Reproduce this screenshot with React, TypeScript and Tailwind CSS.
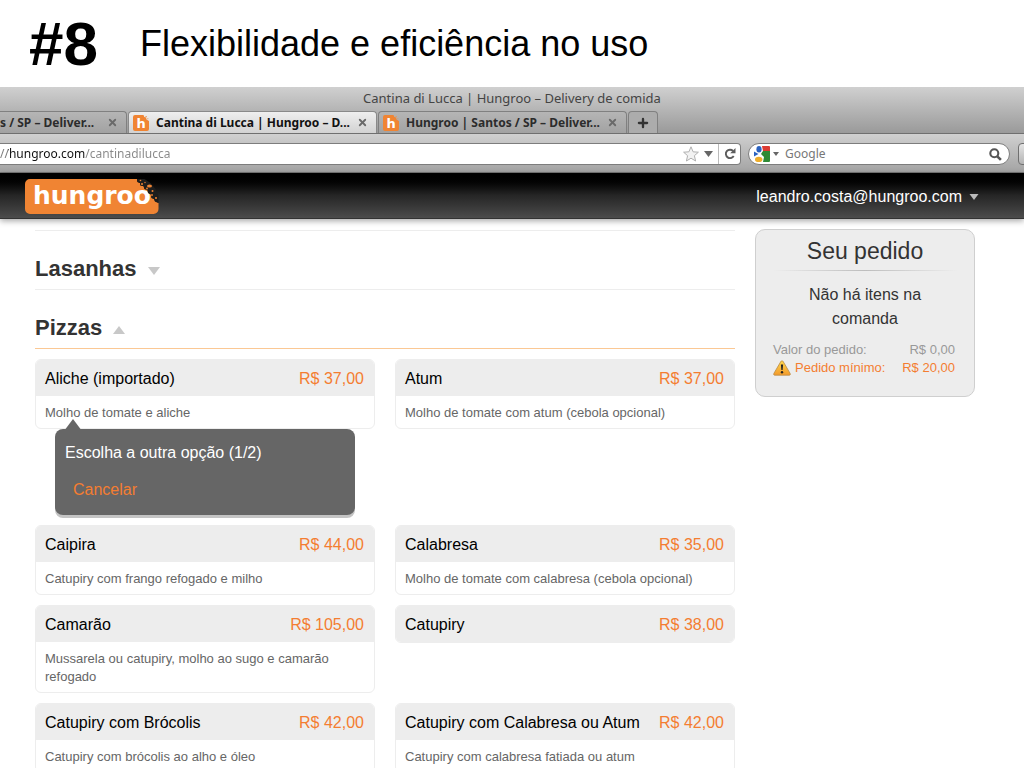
import { Plus, X } from "lucide-react";

const tabs = [
  { title: "s / SP – Deliver...", icon: false, active: false, width: "w-[127px]" },
  { title: "Cantina di Lucca | Hungroo – D...", icon: true, active: true, width: "w-[249px]" },
  { title: "Hungroo | Santos / SP – Deliver...", icon: true, active: false, width: "w-[249px]" },
];

const pizzas = [
  { name: "Aliche (importado)", price: "R$ 37,00", description: "Molho de tomate e aliche", choosing: true },
  { name: "Atum", price: "R$ 37,00", description: "Molho de tomate com atum (cebola opcional)" },
  { name: "Caipira", price: "R$ 44,00", description: "Catupiry com frango refogado e milho" },
  { name: "Calabresa", price: "R$ 35,00", description: "Molho de tomate com calabresa (cebola opcional)" },
  { name: "Camarão", price: "R$ 105,00", description: "Mussarela ou catupiry, molho ao sugo e camarão refogado" },
  { name: "Catupiry", price: "R$ 38,00" },
  { name: "Catupiry com Brócolis", price: "R$ 42,00", description: "Catupiry com brócolis ao alho e óleo" },
  { name: "Catupiry com Calabresa ou Atum", price: "R$ 42,00", description: "Catupiry com calabresa fatiada ou atum" },
];

function Triangle({ up = false, className = "" }: { up?: boolean; className?: string }) {
  return (
    <svg viewBox="0 0 12 8" className={className} fill="currentColor" aria-hidden="true">
      <path d={up ? "M0 8 6 0l6 8z" : "M0 0h12L6 8z"} />
    </svg>
  );
}

function Favicon() {
  return (
    <svg viewBox="0 0 16 16" className="size-4 shrink-0" aria-hidden="true">
      <path d="M2 0h8.500l.8 2 1.700.5.5 2L16 6v8a2 2 0 0 1-2 2H2a2 2 0 0 1-2-2V2a2 2 0 0 1 2-2z" fill="#f08433" />
      <path d="M12.500 1h1.300v1.300h-1.300zM14.300 3.200h1v1h-1z" fill="#e89a5c" />
      <text x="3.500" y="12.500" fill="#fff" fontSize="13" fontWeight="700" fontFamily="DejaVu Sans, sans-serif">
        h
      </text>
    </svg>
  );
}

function Logo() {
  return (
    <svg viewBox="0 0 134 35" className="h-[35px] w-[134px] overflow-visible" role="img" aria-label="hungroo">
      <defs>
        <clipPath id="logo-shape">
          <path d="M5 0h107l.5 3 2.500 1 .5 2.500 3 .5 1 3 3 1 .5 3 3 1.500.5 3.500 2.500 1 1 2.500 3.500 1.500v6a5 5 0 0 1-5 5H5a5 5 0 0 1-5-5V5a5 5 0 0 1 5-5z" />
        </clipPath>
      </defs>
      <g clipPath="url(#logo-shape)">
        <rect width="134" height="35" fill="#f08433" />
        <text x="8" y="25" fill="#fff" fontSize="25" fontWeight="700" fontFamily="DejaVu Sans, sans-serif">
          hungroo
        </text>
      </g>
      <path d="M112 0l.5 3 2.500 1 .5 2.500 3 .5 1 3 3 1 .5 3 3 1.500.5 3.500 2.500 1 1 2.500 3.500 1.500V17l-3-7-5-6-6-4z" fill="#1d1d1d" />
      <g fill="#f08433">
        <ellipse cx="124.500" cy="7" rx="2.500" ry="1.500" />
        <circle cx="117" cy="5" r="1" />
        <circle cx="115.500" cy="1.500" r=".8" />
        <circle cx="122" cy="9.500" r=".9" />
        <circle cx="127.500" cy="12" r="1" />
        <circle cx="127" cy="16" r=".9" />
        <circle cx="131" cy="19" r="1" />
        <circle cx="120" cy="3.500" r=".7" />
      </g>
    </svg>
  );
}

function GoogleIcon() {
  return (
    <svg viewBox="0 0 16 16" className="size-4" aria-hidden="true">
      <path d="M8 0h7a1 1 0 0 1 1 1v4H9z" fill="#dc3b33" />
      <path d="M9 5h7v10a1 1 0 0 1-1 1H9l1-5-3-3z" fill="#2f8a36" />
      <path d="M0 5.500l4.500 2.500L0 10.500z" fill="#2a62c0" />
      <ellipse cx="5" cy="3.200" rx="2.600" ry="3.200" fill="#2a62c0" />
      <ellipse cx="4.700" cy="13.400" rx="3.700" ry="2.600" fill="#eeae2c" />
    </svg>
  );
}

function StarIcon() {
  return (
    <svg viewBox="0 0 16 16" className="size-4" aria-hidden="true">
      <path
        d="M8 .8l2.100 5 5.300.4-4 3.500 1.200 5.300L8 12.200 3.400 15l1.200-5.300-4-3.500 5.300-.4z"
        fill="#f2f2f2"
        stroke="#b0b0b0"
        strokeLinejoin="round"
      />
    </svg>
  );
}

function ReloadIcon() {
  return (
    <svg viewBox="0 0 12 12" className="size-3" aria-hidden="true">
      <path d="M9 2.900A4.200 4.200 0 1 0 9.700 8" fill="none" stroke="#5c5c5c" strokeWidth="1.900" />
      <path d="M11.500 0v5.300H6.200z" fill="#5c5c5c" />
    </svg>
  );
}

function SearchIcon() {
  return (
    <svg viewBox="0 0 13 13" className="size-[13px]" fill="none" stroke="#555" aria-hidden="true">
      <circle cx="5.300" cy="5.300" r="4" strokeWidth="2.100" />
      <path d="M8.300 8.300l3.600 3.600" strokeWidth="2.600" />
    </svg>
  );
}

function WarningIcon() {
  return (
    <svg viewBox="0 0 18 16" className="h-4 w-[18px]" aria-hidden="true">
      <defs>
        <linearGradient id="warning" x1="0" y1="0" x2="0" y2="1">
          <stop offset="0" stopColor="#ffd84d" />
          <stop offset="1" stopColor="#f39a2b" />
        </linearGradient>
      </defs>
      <path
        d="M9 .8c.6 0 .9.300 1.200.8l6.900 11.800c.5.9.1 1.800-.9 1.800H1.800c-1 0-1.400-.9-.9-1.800L7.800 1.600C8.100 1.100 8.400.8 9 .8z"
        fill="url(#warning)"
        stroke="#b98a45"
        strokeWidth=".8"
      />
      <path d="M7.900 4.500h2.200l-.5 5.500H8.400z" fill="#222" />
      <circle cx="9" cy="12.200" r="1.200" fill="#222" />
    </svg>
  );
}

function BrowserChrome() {
  return (
    <div className="font-['Noto_Sans',sans-serif]">
      <div className="border-b border-[#6f6f6f] bg-linear-to-b from-[#d0d0d0] to-[#9a9a9a]">
        <div className="flex h-6 items-center justify-center text-[13px] text-[#444]">
          Cantina di Lucca | Hungroo – Delivery de comida
        </div>
        <div className="flex gap-px">
          {tabs.map((tab) => (
            <div
              key={tab.title}
              className={`flex h-[22px] items-center overflow-hidden border-x border-t text-xs font-bold ${tab.width} ${
                tab.icon ? "rounded-t-sm pl-1" : "rounded-tr-sm border-l-0"
              } ${
                tab.active
                  ? "border-[#8a8a8a] bg-linear-to-b from-[#efefef] to-[#d2d2d2] text-[#111]"
                  : "border-[#808080] bg-linear-to-b from-[#b5b5b5] to-[#a2a2a2] text-[#2c2c2c]"
              }`}
            >
              {tab.icon && <Favicon />}
              <span className={`flex-1 whitespace-nowrap ${tab.icon ? "pl-[7px]" : ""}`}>{tab.title}</span>
              <button aria-label="Fechar aba" className="mr-2 text-[#6a6a6a]">
                <X className="size-[11px]" strokeWidth={4} />
              </button>
            </div>
          ))}
          <button
            aria-label="Nova aba"
            className="flex h-[22px] w-[30px] items-center justify-center rounded-t-sm border-x border-t border-[#808080] bg-[#acacac] text-[#333]"
          >
            <Plus className="size-[14px]" strokeWidth={4} />
          </button>
        </div>
      </div>

      <div className="flex h-[39px] items-center overflow-hidden border-b border-[#777] bg-linear-to-b from-[#d0d0d0] to-[#a4a4a4] pt-[2px] text-xs">
        <div className="flex h-[22px] flex-1 items-center rounded-r-sm border-y border-r border-[#7d7d7d] bg-white">
          <input
            aria-label="Endereço"
            defaultValue="//hungroo.com/cantinadilucca"
            className="min-w-0 flex-1 bg-linear-[90deg,#777_8px,#111_8px,#111_85px,#888_85px] bg-clip-text text-transparent outline-none"
          />
          <button aria-label="Favoritar">
            <StarIcon />
          </button>
          <button aria-label="Histórico" className="px-[5px] text-[#666]">
            <Triangle className="h-2 w-[9px]" />
          </button>
          <button
            aria-label="Recarregar"
            className="flex h-full w-[22px] items-center justify-center border-l border-[#bbb]"
          >
            <ReloadIcon />
          </button>
        </div>
        <div className="ml-[7px] flex h-[22px] w-[262px] items-center rounded-full border border-[#7d7d7d] bg-white pr-[7px] pl-[5px]">
          <GoogleIcon />
          <Triangle className="mx-[3px] h-1 w-[6px] text-[#666]" />
          <input
            aria-label="Pesquisar"
            placeholder="Google"
            className="min-w-0 flex-1 pl-[3px] outline-none placeholder:text-[#777]"
          />
          <button aria-label="Buscar">
            <SearchIcon />
          </button>
        </div>
        <button
          aria-label="Downloads"
          className="-mr-6 ml-2 h-[22px] w-[30px] shrink-0 rounded-sm border border-[#6f6f6f] bg-linear-to-b from-[#e4e4e4] to-[#b4b4b4]"
        />
      </div>
    </div>
  );
}

function PizzaItem({ name, price, description, choosing }: (typeof pizzas)[number]) {
  return (
    <li>
      <div className="overflow-hidden rounded-md border border-[#ededed] bg-white">
        <a
          href="#comanda"
          className="flex h-9 items-center justify-between bg-[#ededed] px-[9px] pt-[2px] pr-[10px] whitespace-nowrap"
        >
          <span className="text-black">{name}</span>
          <span className="text-[#f47d31]">{price}</span>
        </a>
        {description && (
          <p className="px-[9px] pt-2 pb-[6px] text-[13px] leading-[18px] text-[#666]">{description}</p>
        )}
      </div>
      {choosing && (
        <div className="relative mx-5 h-[86px] rounded-lg bg-[#666] px-[10px] pt-3 shadow-[0_3px_0_#c4c4c4]">
          <Triangle up className="absolute -top-[10px] left-[9px] h-[11px] w-[18px] text-[#666]" />
          <p className="leading-6 text-white">Escolha a outra opção (1/2)</p>
          <button className="mt-[13px] px-2 leading-6 text-[#f47d31]">Cancelar</button>
        </div>
      )}
    </li>
  );
}

function Menu() {
  return (
    <main className="flex-1 pt-[11px]">
      <h2 className="border-y border-[#ededed] pt-[25px] pb-[7px] text-[22px] leading-[26px] font-bold">
        <button className="flex items-center gap-[11px]">
          Lasanhas
          <Triangle className="mt-1 h-2 w-3 text-[#c8c8c8]" />
        </button>
      </h2>
      <h2 className="border-b border-[#fbc894] pt-[25px] pb-[7px] text-[22px] leading-[26px] font-bold">
        <button className="flex items-center gap-[11px]">
          Pizzas
          <Triangle up className="mt-1 h-2 w-3 text-[#c8c8c8]" />
        </button>
      </h2>
      <ul className="mt-[10px] grid grid-cols-2 gap-x-5 gap-y-[10px]">
        {pizzas.map((pizza) => (
          <PizzaItem key={pizza.name} {...pizza} />
        ))}
      </ul>
    </main>
  );
}

function Order() {
  return (
    <aside className="mt-[10px] w-[220px] shrink-0 self-start rounded-[10px] border border-[#cfcfcf] bg-[#ededed] px-[17px] pt-[7px] pb-[19px] text-center">
      <h2 className="text-[23px] leading-7">Seu pedido</h2>
      <div className="mt-[5px] h-px bg-linear-to-r from-transparent via-[#bdbdbd] to-transparent" />
      <p className="mx-auto mt-3 w-[140px] leading-6">Não há itens na comanda</p>
      <dl className="mt-[10px] pr-[2px] text-[13px] leading-[18px]">
        <div className="flex justify-between text-[#999]">
          <dt>Valor do pedido:</dt>
          <dd>R$ 0,00</dd>
        </div>
        <div className="flex justify-between text-[#f47d31]">
          <dt className="flex items-center gap-1">
            <WarningIcon />
            Pedido mínimo:
          </dt>
          <dd>R$ 20,00</dd>
        </div>
      </dl>
    </aside>
  );
}

export default function App() {
  return (
    <div className="h-screen overflow-hidden bg-white font-['Liberation_Sans',Arial,sans-serif] text-base text-[#333]">
      <div className="flex h-[87px] items-center gap-[42px] pl-[29px] text-black">
        <span className="text-[62px] font-bold">#8</span>
        <h1 className="text-4xl">Flexibilidade e eficiência no uso</h1>
      </div>

      <BrowserChrome />

      <header className="relative flex h-[46px] items-center justify-between border-b border-[#333] bg-linear-to-b from-black via-[#262626] to-[#4c4c4c] pt-[2px] pr-[45px] pl-[25px] shadow-[0_2px_6px_rgba(0,0,0,0.35)]">
        <a href="#inicio">
          <Logo />
        </a>
        <button className="flex items-center gap-[7px] text-white">
          leandro.costa@hungroo.com
          <Triangle className="h-[6px] w-[10px] text-[#bbb]" />
        </button>
      </header>

      <div className="flex gap-5 pr-[49px] pl-[35px]">
        <Menu />
        <Order />
      </div>
    </div>
  );
}
